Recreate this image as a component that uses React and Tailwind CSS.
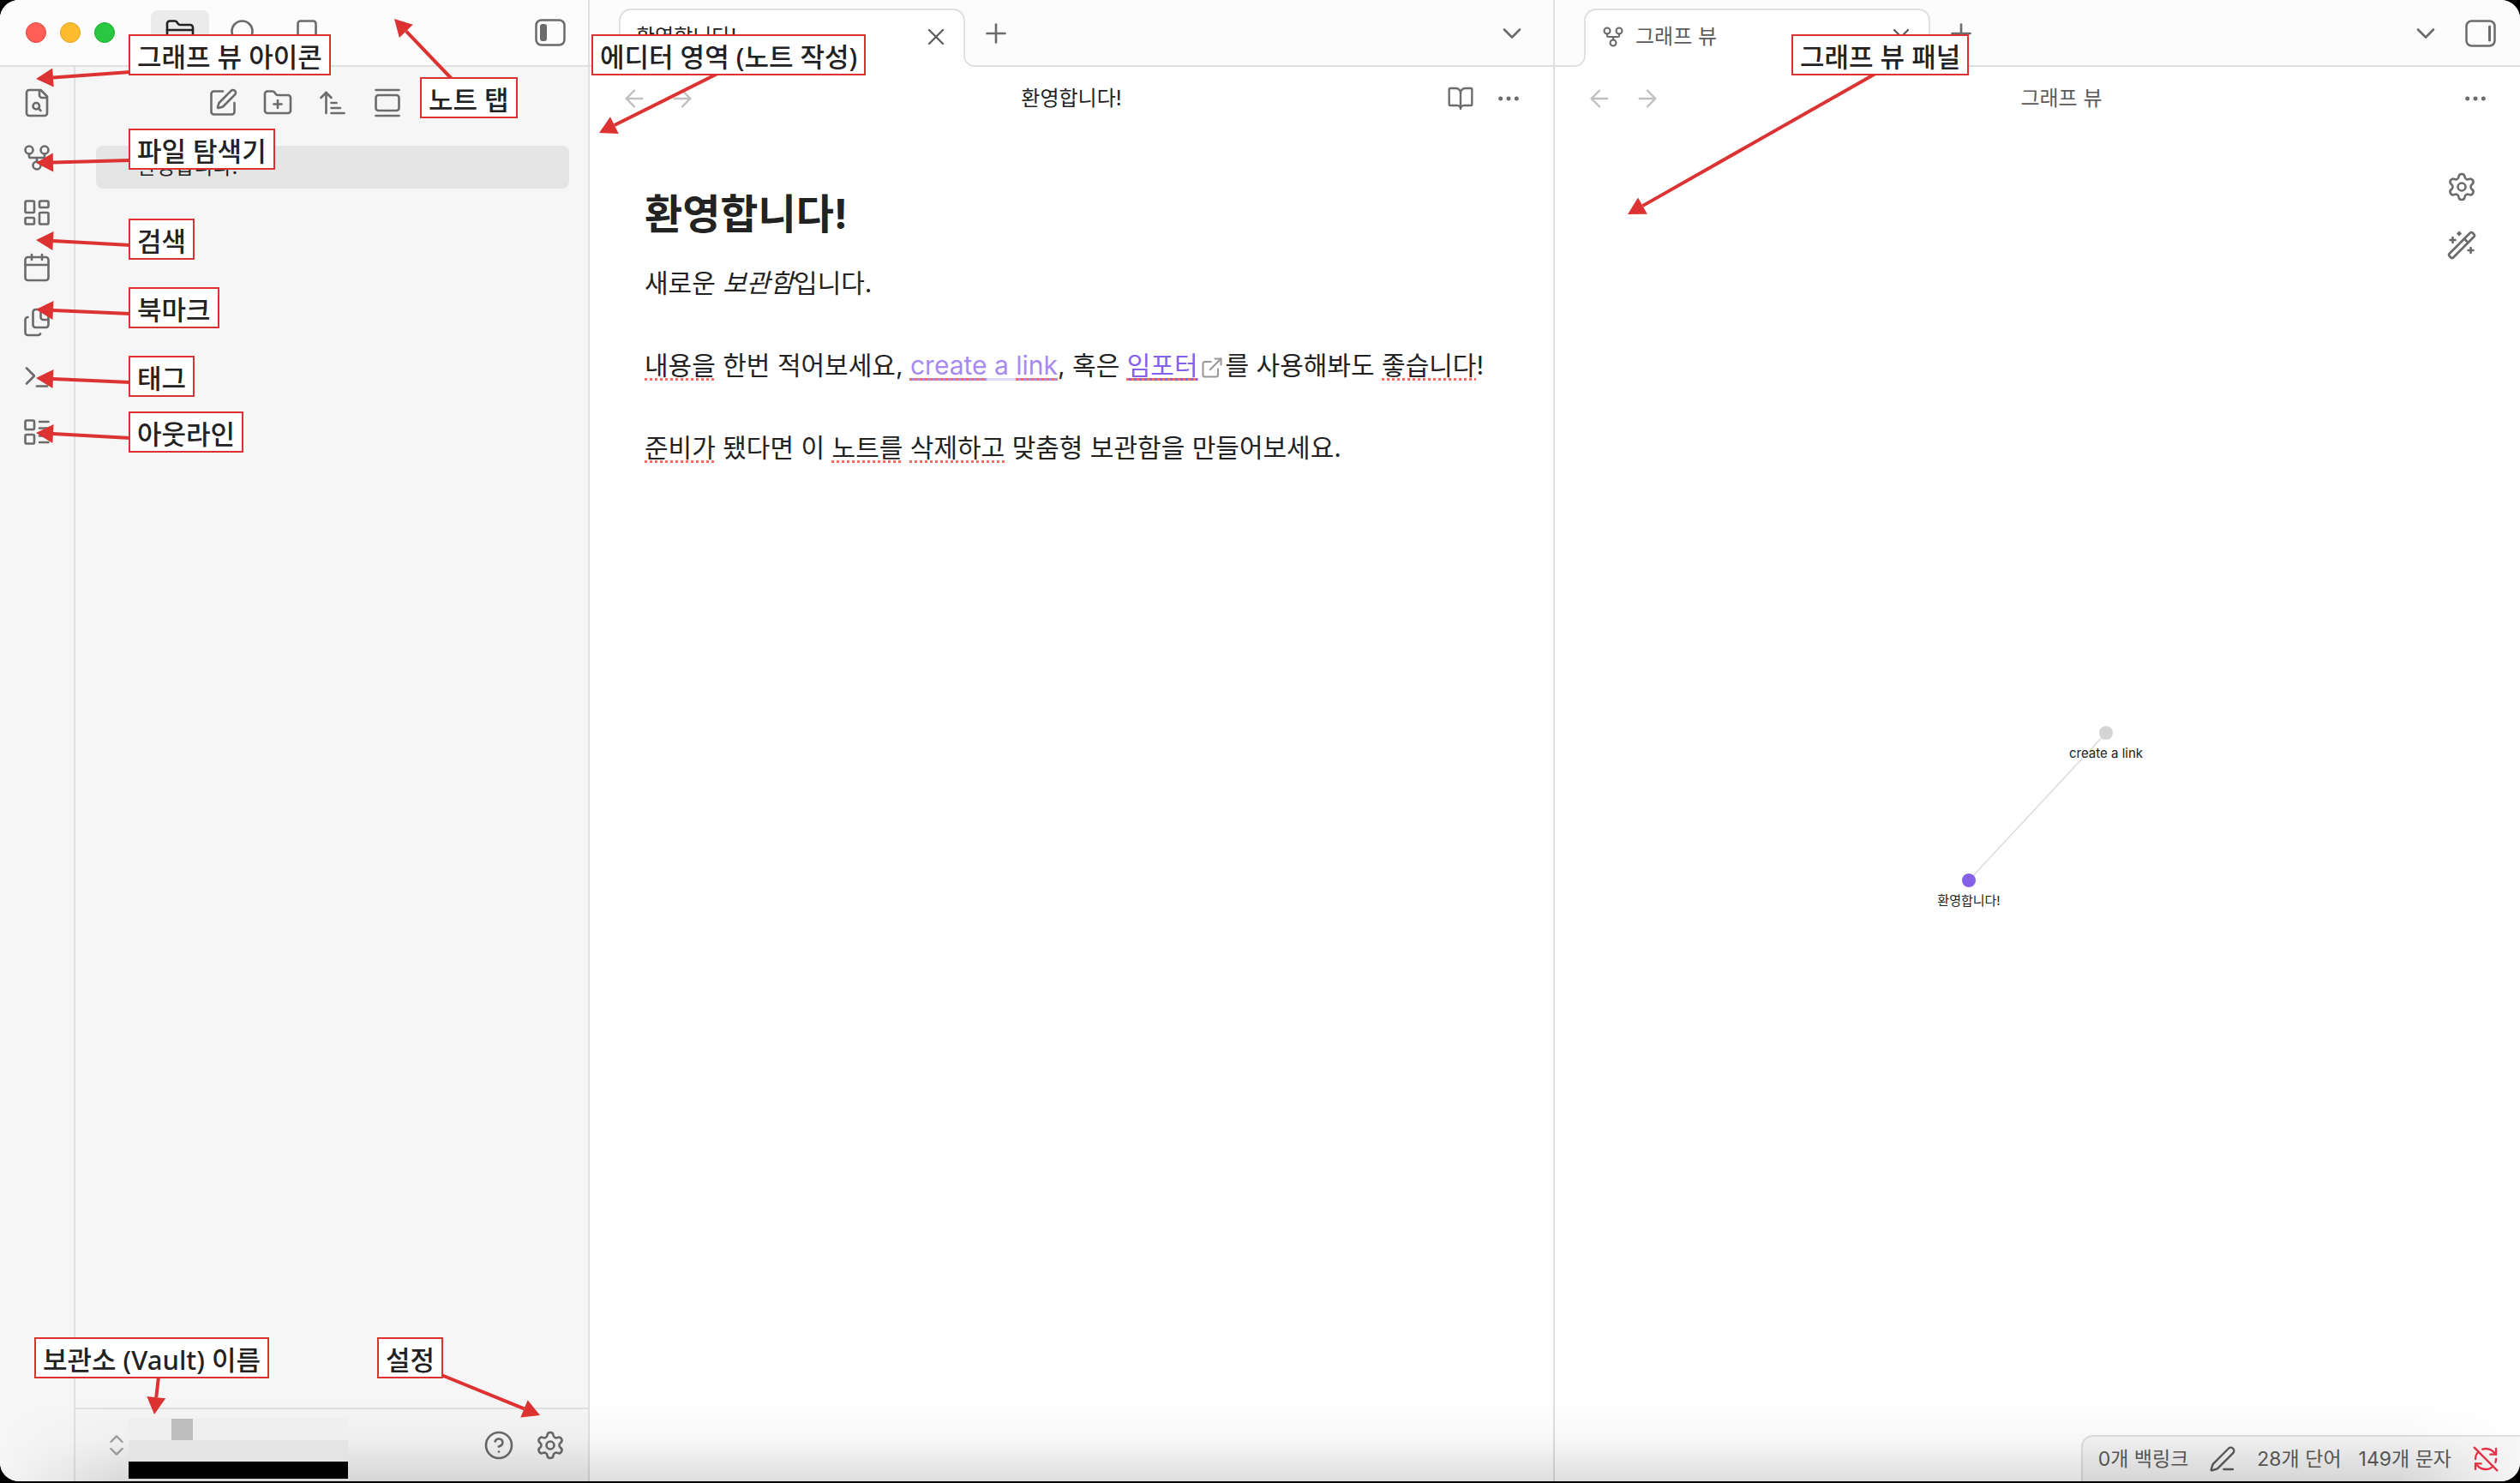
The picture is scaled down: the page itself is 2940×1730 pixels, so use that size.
import React from 'react';
import {
    ArrowLeft, ArrowRight, ArrowUpNarrowWide, Bookmark, BookOpen, Calendar, ChevronDown, ChevronsUpDown,
    CircleHelp, Ellipsis, ExternalLink, FolderClosed, FolderPlus, GalleryVertical, GitFork, LayoutDashboard,
    LayoutList, PenLine, Plus, RefreshCwOff, Search, Settings, SquarePen, Terminal, WandSparkles, X,
} from 'lucide-react';

const FileSearchIcon = (props) => (
    <svg viewBox="0 0 24 24" fill="none" stroke="currentColor" strokeLinecap="round" strokeLinejoin="round" {...props}>
        <path d="M15 2H6a2 2 0 0 0-2 2v16a2 2 0 0 0 2 2h12a2 2 0 0 0 2-2V7Z" />
        <path d="M14 2v4a2 2 0 0 0 2 2h4" />
        <circle cx="11.5" cy="14.5" r="2.5" />
        <path d="M13.3 16.3 15 18" />
    </svg>
);

const FilesIcon = (props) => (
    <svg viewBox="0 0 24 24" fill="none" stroke="currentColor" strokeLinecap="round" strokeLinejoin="round" {...props}>
        <path d="M21 10h-4a2 2 0 0 1-2-2V2" />
        <path d="M11 16a2 2 0 0 1-2-2V4a2 2 0 0 1 2-2h6l4 4v8a2 2 0 0 1-2 2Z" />
        <path d="M5 8a2 2 0 0 0-2 2v10a2 2 0 0 0 2 2h8a2 2 0 0 0 1.7-1" />
    </svg>
);

const PanelToggleIcon = ({ side }) => (
    <svg viewBox="0 0 36 32" className="w-9 h-8" fill="none" stroke="currentColor" strokeWidth="2.5">
        <rect x="1.5" y="1.5" width="33" height="29" rx="6" />
        {side === 'left'
            ? <rect x="6" y="6" width="8" height="20" rx="3" fill="currentColor" stroke="none" />
            : <path d="M28.5 8v16" strokeWidth="3" strokeLinecap="round" />}
    </svg>
);

const IconButton = ({ icon: Icon, label, className = '', iconClass = 'w-9 h-9' }) => (
    <button type="button" aria-label={label} className={`flex items-center justify-center shrink-0 ${className}`}>
        <Icon className={iconClass} strokeWidth={1.75} />
    </button>
);

const ribbonItems = [
    { icon: FileSearchIcon, label: '빠른 전환기' },
    { icon: GitFork, label: '그래프 뷰 열기' },
    { icon: LayoutDashboard, label: '캔버스' },
    { icon: Calendar, label: '일일 노트' },
    { icon: FilesIcon, label: '템플릿' },
    { icon: Terminal, label: '명령어' },
    { icon: LayoutList, label: '베이스' },
];

const annotations = [
    { text: '그래프 뷰 아이콘', pos: 'left-[150px] top-10', from: [152, 84], to: [42, 92] },
    { text: '노트 탭', pos: 'left-[490px] top-[90px]', from: [527, 92], to: [460, 22] },
    { text: '파일 탐색기', pos: 'left-[150px] top-[150px]', from: [152, 187], to: [42, 190] },
    { text: '검색', pos: 'left-[150px] top-[255px]', from: [152, 286], to: [42, 280] },
    { text: '북마크', pos: 'left-[150px] top-[335px]', from: [152, 366], to: [42, 361] },
    { text: '태그', pos: 'left-[150px] top-[415px]', from: [152, 446], to: [42, 441] },
    { text: '아웃라인', pos: 'left-[150px] top-[480px]', from: [152, 511], to: [42, 505] },
    { text: '보관소 (Vault) 이름', pos: 'left-10 top-[1560px]', from: [185, 1606], to: [180, 1650] },
    { text: '설정', pos: 'left-[440px] top-[1560px]', from: [515, 1604], to: [630, 1651] },
    { text: '에디터 영역 (노트 작성)', pos: 'left-[690px] top-10', from: [837, 86], to: [699, 155] },
    { text: '그래프 뷰 패널', pos: 'left-[2090px] top-10', from: [2188, 86], to: [1899, 250] },
];

const Arrow = ({ from, to }) => {
    const [x, y] = to;
    const dx = x - from[0];
    const dy = y - from[1];
    const len = Math.hypot(dx, dy);
    const ux = dx / len;
    const uy = dy / len;
    const bx = x - ux * 20;
    const by = y - uy * 20;
    return (
        <g>
            <line x1={from[0]} y1={from[1]} x2={bx} y2={by} strokeWidth="4" />
            <polygon points={`${x},${y} ${bx - uy * 11},${by + ux * 11} ${bx + uy * 11},${by - ux * 11}`} stroke="none" />
        </g>
    );
};

const Tab = ({ title, icon: Icon, titleClass }) => (
    <div className="relative flex items-center w-[404px] h-[68px] pl-[18px] pr-4 pb-1 bg-white border-2 border-b-0 border-[#e0e0e0] rounded-t-[14px]">
        <svg viewBox="0 0 14 14" className="absolute -left-[14px] bottom-0 w-[14px] h-[14px]" fill="none">
            <path d="M14 0v14H0v-2A12 12 0 0 0 12 0Z" fill="#fff" />
            <path d="M13 0A12 12 0 0 1 1 13H0" stroke="#e0e0e0" strokeWidth="2" />
        </svg>
        <svg viewBox="0 0 14 14" className="absolute -right-[14px] bottom-0 w-[14px] h-[14px]" fill="none">
            <path d="M0 0v14h14v-2A12 12 0 0 1 2 0Z" fill="#fff" />
            <path d="M1 0A12 12 0 0 0 13 13h1" stroke="#e0e0e0" strokeWidth="2" />
        </svg>
        {Icon && <Icon className="w-7 h-7 mr-3 text-[#6b6b6b]" strokeWidth={1.75} />}
        <span className={`flex-1 truncate ${titleClass}`}>{title}</span>
        <IconButton icon={X} label="닫기" iconClass="w-8 h-8" className="w-8 h-8 text-[#5c5c5c]" />
    </div>
);

const ViewHeader = ({ title, titleClass, children }) => (
    <div className="flex items-center h-[74px] px-6">
        <IconButton icon={ArrowLeft} label="뒤로" iconClass="w-8 h-8" className="w-14 h-14 text-[#c0c0c0]" />
        <IconButton icon={ArrowRight} label="앞으로" iconClass="w-8 h-8" className="w-14 h-14 text-[#c0c0c0]" />
        <span className={`flex-1 text-center ${titleClass}`}>{title}</span>
        {children}
        <IconButton icon={Ellipsis} label="더보기" iconClass="w-8 h-8" className="w-14 h-14" />
    </div>
);

const Misspelled = ({ children }) => (
    <span className="underline decoration-dotted decoration-[#ff6b63] decoration-[3px] underline-offset-4">{children}</span>
);

const App = () => {
    return (
        <div className="h-screen bg-black pb-0.5">
            <div className="relative flex flex-col h-full overflow-hidden rounded-[22px] bg-white font-['Inter','Noto_Sans_CJK_KR',sans-serif] text-2xl text-[#6b6b6b]">
                <div className="flex flex-1 min-h-0">
                    {/* Left sidebar */}
                    <aside className="flex flex-col w-[688px] shrink-0 bg-[#f6f6f6] border-r-2 border-[#e0e0e0]">
                        <div className="flex items-center h-[78px] pl-[30px] pr-[26px] bg-[#fcfcfc] border-b-2 border-[#e0e0e0]">
                            <div className="flex gap-4">
                                <span className="w-6 h-6 rounded-full bg-[#ff5f57] border border-[#e0443e]" />
                                <span className="w-6 h-6 rounded-full bg-[#febc2e] border border-[#dfa023]" />
                                <span className="w-6 h-6 rounded-full bg-[#28c840] border border-[#1aab29]" />
                            </div>
                            <div className="flex gap-[6px] ml-[42px]">
                                <IconButton icon={FolderClosed} label="파일 탐색기" className="w-[68px] h-[52px] rounded-lg bg-[#ebebeb] text-[#222]" />
                                <IconButton icon={Search} label="검색" className="w-[68px] h-[52px]" />
                                <IconButton icon={Bookmark} label="북마크" className="w-[68px] h-[52px]" />
                            </div>
                            <button type="button" aria-label="사이드바 접기" className="ml-auto"><PanelToggleIcon side="left" /></button>
                        </div>

                        <div className="flex flex-1 min-h-0">
                            <nav className="flex flex-col items-center w-[88px] pt-[10px] border-r-2 border-[#e0e0e0]">
                                {ribbonItems.map((item) => (
                                    <IconButton key={item.label} icon={item.icon} label={item.label} className="w-16 h-16" />
                                ))}
                            </nav>

                            <div className="flex flex-col flex-1">
                                <div className="flex justify-center pt-[10px] pr-[62px]">
                                    <IconButton icon={SquarePen} label="새 노트" className="w-16 h-16" />
                                    <IconButton icon={FolderPlus} label="새 폴더" className="w-16 h-16" />
                                    <IconButton icon={ArrowUpNarrowWide} label="정렬 순서 변경" className="w-16 h-16" />
                                    <IconButton icon={GalleryVertical} label="자동 표시" className="w-16 h-16" />
                                </div>
                                <div className="flex-1 pt-[18px] pl-6 pr-[22px]">
                                    <a href="#note" className="flex items-center h-[50px] pl-12 rounded-lg bg-[#e5e5e5] text-[#222]">환영합니다!</a>
                                </div>
                                <footer className="flex items-center h-[86px] pl-8 pr-[26px] border-t-2 border-[#e0e0e0]">
                                    <IconButton icon={ChevronsUpDown} label="보관소 전환" iconClass="w-8 h-8" className="w-8 h-8 text-[#a0a0a0]" />
                                    <div className="relative z-10 w-64 h-[70px] -ml-0.5 mt-2">
                                        <div className="h-[25px] pl-[50px] bg-[#efefef]"><div className="w-[25px] h-full bg-[#bdbdbd]" /></div>
                                        <div className="h-[25px] bg-[#e4e4e4]" />
                                        <div className="h-5 bg-black" />
                                    </div>
                                    <div className="flex gap-6 ml-auto">
                                        <IconButton icon={CircleHelp} label="도움말" />
                                        <IconButton icon={Settings} label="설정" />
                                    </div>
                                </footer>
                            </div>
                        </div>
                    </aside>

                    <div className="grid grid-cols-2 flex-1 min-w-0">
                        {/* Editor pane */}
                        <section className="flex flex-col min-w-0 border-r-2 border-[#e0e0e0]">
                            <div className="flex items-end h-[78px] pl-[34px] pr-[30px] bg-[#fcfcfc] shadow-[inset_0_-2px_0_#e0e0e0]">
                                <Tab title="환영합니다!" titleClass="text-[#222]" />
                                <IconButton icon={Plus} label="새 탭" className="ml-[18px] h-[78px]" />
                                <IconButton icon={ChevronDown} label="탭 목록" className="ml-auto h-[78px]" />
                            </div>
                            <ViewHeader title="환영합니다!" titleClass="text-[#222]">
                                <IconButton icon={BookOpen} label="읽기 모드" iconClass="w-8 h-8" className="w-14 h-14" />
                            </ViewHeader>
                            <article id="note" className="px-16 pt-[66px] text-[30px] leading-[48px] text-[#222]">
                                <h1 className="text-5xl leading-[64px] font-bold">환영합니다!</h1>
                                <p className="mt-6">새로운 <em>보관함</em>입니다.</p>
                                <p className="mt-12">
                                    <Misspelled>내용을</Misspelled> 한번 적어보세요,{' '}
                                    <a href="#link" className="text-[#a68af0]">
                                        <span className="underline decoration-[3px] underline-offset-4"><Misspelled>create</Misspelled></span>
                                        <span className="underline decoration-[3px] underline-offset-4 decoration-[#e0d8fb]"> a </span>
                                        <span className="underline decoration-[3px] underline-offset-4"><Misspelled>link</Misspelled></span>
                                    </a>, 혹은{' '}
                                    <a href="#importer" className="text-[#8560e8] underline decoration-[3px] underline-offset-4"><Misspelled>임포터</Misspelled></a>
                                    <ExternalLink className="inline w-7 h-7 mx-0.5 text-[#999]" strokeWidth={1.75} />를 사용해봐도 <Misspelled>좋습니다</Misspelled>!
                                </p>
                                <p className="mt-12">
                                    <Misspelled>준비가</Misspelled> 됐다면 이 <Misspelled>노트를</Misspelled> <Misspelled>삭제하고</Misspelled> 맞춤형 보관함을 만들어보세요.
                                </p>
                            </article>
                        </section>

                        {/* Graph pane */}
                        <section className="flex flex-col min-w-0">
                            <div className="flex items-end h-[78px] pl-[34px] pr-7 bg-[#fcfcfc] shadow-[inset_0_-2px_0_#e0e0e0]">
                                <Tab title="그래프 뷰" icon={GitFork} titleClass="text-[#5c5c5c]" />
                                <IconButton icon={Plus} label="새 탭" className="ml-[18px] h-[78px]" />
                                <IconButton icon={ChevronDown} label="탭 목록" className="ml-auto mr-7 h-[78px]" />
                                <button type="button" aria-label="오른쪽 사이드바 열기" className="flex items-center h-[78px]"><PanelToggleIcon side="right" /></button>
                            </div>
                            <ViewHeader title="그래프 뷰" titleClass="text-[#5c5c5c]" />
                            <div className="relative flex flex-1 items-center justify-center pt-0.5">
                                <svg viewBox="0 0 280 240" className="w-[280px] h-[240px]" fill="#222">
                                    <line x1="60" y1="206" x2="220" y2="34" stroke="#dcdcdc" strokeWidth="1.5" />
                                    <circle cx="220" cy="34" r="8" fill="#d4d4d4" />
                                    <circle cx="60" cy="206" r="8" fill="#8560e8" />
                                    <text x="220" y="63" textAnchor="middle" fontSize="15">create a link</text>
                                    <text x="60" y="235" textAnchor="middle" fontSize="15">환영합니다!</text>
                                </svg>
                                <div className="absolute top-12 right-[50px] flex flex-col gap-8">
                                    <IconButton icon={Settings} label="그래프 설정" />
                                    <IconButton icon={WandSparkles} label="애니메이션 시작" />
                                </div>
                            </div>
                        </section>
                    </div>
                </div>

                {/* Status bar */}
                <div className="absolute right-0 bottom-0 flex items-center h-[54px] pl-[18px] pr-6 border-t-2 border-l-2 border-[#e0e0e0] rounded-tl-[14px] bg-[#f6f6f6] text-[23px] text-[#5c5c5c]">
                    <span>0개 백링크</span>
                    <PenLine className="w-8 h-8 mx-6" strokeWidth={1.75} />
                    <span>28개 단어</span>
                    <span className="ml-5">149개 문자</span>
                    <RefreshCwOff className="w-8 h-8 ml-6 text-[#e93147]" strokeWidth={1.75} />
                </div>

                {/* Shade along the window's bottom edge */}
                <div className="absolute inset-x-0 bottom-0 h-24 pointer-events-none bg-linear-to-b from-transparent via-black/3 to-black/13 [mask-image:linear-gradient(to_right,transparent,black_160px,black_calc(100%-140px),transparent)]" />
            </div>

            {/* Callouts over the window */}
            <svg className="absolute inset-0 w-full h-full pointer-events-none" stroke="#dc3232" fill="#dc3232">
                {annotations.map((a) => <Arrow key={a.text} from={a.from} to={a.to} />)}
            </svg>
            {annotations.map((a) => (
                <div key={a.text} className={`absolute ${a.pos} h-12 px-2 pt-1 flex items-center bg-white border-2 border-[#dc3232] font-['Noto_Sans','Noto_Sans_CJK_KR',sans-serif] font-medium text-[31px] text-[#222] whitespace-nowrap`}>
                    {a.text}
                </div>
            ))}
        </div>
    );
};

export default App;
